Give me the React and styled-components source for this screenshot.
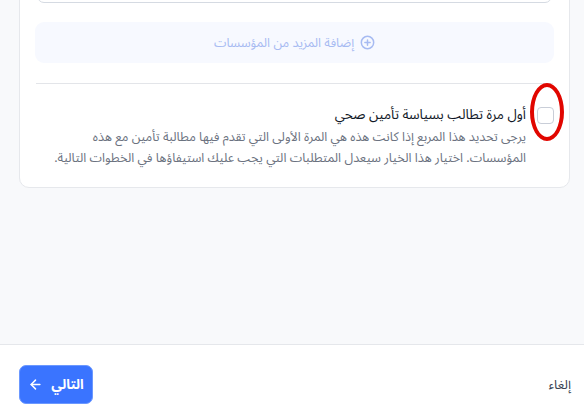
import React from "react";
import styled, { createGlobalStyle } from "styled-components";
import { ArrowLeft } from "lucide-react";

const Global = createGlobalStyle`
  html, body { margin: 0; padding: 0; }
  body {
    width: 584px;
    height: 416px;
    overflow: hidden;
    background: #f8f9fb;
    font-family: "Noto Sans Arabic", "Noto Sans", "DejaVu Sans", sans-serif;
  }
  * { box-sizing: border-box; }
`;

const Page = styled.div`
  direction: rtl;
  width: 584px;
  height: 416px;
  display: flex;
  flex-direction: column;
  background: #f8f9fb;
`;

const Main = styled.div`
  height: 344px;
  flex: none;
  overflow: hidden;
  padding: 0 14px 0 19px;
`;

const Card = styled.section`
  margin-top: -60px;
  background: #fff;
  border: 1px solid #e6e8ec;
  border-radius: 10px;
  padding: 16px 15px 18px 15px;
  display: flex;
  flex-direction: column;
`;

const FieldBox = styled.div`
  margin: 0 2px;
  height: 46px;
  border: 1px solid #d5dae2;
  border-radius: 7px;
  background: #fff;
`;

const AddMore = styled.button`
  margin-top: 19px;
  height: 41px;
  border: none;
  border-radius: 9px;
  background: #f7f9ff;
  color: #a7bbf2;
  font-family: inherit;
  font-size: 12.6px;
  display: flex;
  align-items: center;
  justify-content: center;
  gap: 6px;
  direction: rtl;
`;

const Divider = styled.hr`
  margin: 20px 1px 0;
  border: none;
  border-top: 1px solid #e3e5e9;
`;

const CheckRow = styled.div`
  position: relative;
  margin-top: 19px;
  display: flex;
  align-items: flex-start;
  gap: 11px;
`;

const Box = styled.span`
  flex: none;
  width: 17px;
  height: 17px;
  margin-top: 4px;
  border: 1px solid #c9ced8;
  border-radius: 4px;
  background: #fff;
`;

const TextCol = styled.div`
  display: flex;
  flex-direction: column;
`;

const Title = styled.div`
  font-size: 13.5px;
  font-weight: 400;
  color: #111827;
  line-height: 24px;
`;

const Desc = styled.p`
  margin: 0;
  font-size: 12.6px;
  color: #6b7280;
  line-height: 21px;
`;

const Ring = styled.span`
  position: absolute;
  right: -10px;
  top: -20px;
  width: 34px;
  height: 58px;
  border: 4px solid #e10600;
  border-radius: 50%;
  pointer-events: none;
`;

const Footer = styled.footer`
  flex: none;
  height: 72px;
  background: #fff;
  border-top: 1px solid #e5e7eb;
  display: flex;
  align-items: center;
  justify-content: space-between;
  padding: 8px 13px 0 19px;
`;

const Cancel = styled.button`
  border: none;
  background: none;
  padding: 0;
  font-family: inherit;
  font-size: 13px;
  color: #374151;
`;

const Next = styled.button`
  width: 74px;
  height: 39px;
  border: 1px solid #6b98ff;
  border-radius: 7px;
  background: #3a74ff;
  color: #fff;
  font-family: inherit;
  font-size: 13.5px;
  font-weight: 700;
  display: flex;
  align-items: center;
  justify-content: center;
  gap: 8px;
`;

const PlusCircle = () => (
  <svg width="15" height="15" viewBox="0 0 16 16" fill="none" stroke="#a7bbf2" strokeWidth="1.6" strokeLinecap="round">
    <circle cx="8" cy="8" r="6.6" />
    <path d="M8 5.2v5.6M5.2 8h5.6" />
  </svg>
);

export default function App() {
  return (
    <>
      <Global />
      <Page>
        <Main>
          <Card>
            <FieldBox />
            <AddMore type="button">
              <PlusCircle />
              <span>إضافة المزيد من المؤسسات</span>
            </AddMore>
            <Divider />
            <CheckRow>
              <Box />
              <Ring />
              <TextCol>
                <Title>أول مرة تطالب بسياسة تأمين صحي</Title>
                <Desc>
                  يرجى تحديد هذا المربع إذا كانت هذه هي المرة الأولى التي تقدم فيها مطالبة تأمين مع هذه
                  المؤسسات. اختيار هذا الخيار سيعدل المتطلبات التي يجب عليك استيفاؤها في الخطوات التالية.
                </Desc>
              </TextCol>
            </CheckRow>
          </Card>
        </Main>
        <Footer>
          <Cancel type="button">إلغاء</Cancel>
          <Next type="button">
            <span>التالي</span>
            <ArrowLeft size={15} strokeWidth={2.4} />
          </Next>
        </Footer>
      </Page>
    </>
  );
}
